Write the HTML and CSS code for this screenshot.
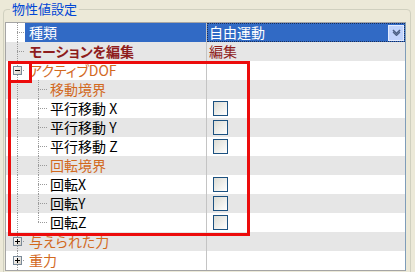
FILE: index.html
```html
<!DOCTYPE html>
<html lang="ja">
<head>
    <meta charset="UTF-8">
    <title>物性値設定</title>
    <link rel="stylesheet" href="styles.css">
</head>
<body>
    <fieldset class="props">
        <legend>物性値設定</legend>
        <div class="grid">
            <div class="row">
                <div class="name"><span class="branch top"></span><span class="label selected">種類</span></div>
                <div class="value selected">
                    <span class="text">自由運動</span>
                    <span class="drop">
                        <svg width="9" height="7" viewBox="0 0 9 7"><polyline points="1,1 4.5,4.5 8,1" fill="none" stroke="#4d6185" stroke-width="1.6"/><polyline points="1,3 4.5,6.5 8,3" fill="none" stroke="#4d6185" stroke-width="1.2"/></svg>
                    </span>
                </div>
            </div>
            <div class="row">
                <div class="name"><span class="branch top"></span><span class="label edit">モーションを編集</span></div>
                <div class="value edit-link">編集</div>
            </div>
            <div class="row">
                <div class="name"><span class="branch top"><span class="toggle minus"></span></span><span class="label cat">アクティブDOF</span></div>
                <div class="value"></div>
            </div>
            <div class="row">
                <div class="name"><span class="branch sub"></span><span class="label cat">移動境界</span></div>
                <div class="value"></div>
            </div>
            <div class="row">
                <div class="name"><span class="branch sub"></span><span class="label">平行移動 X</span></div>
                <div class="value"><span class="check"></span></div>
            </div>
            <div class="row">
                <div class="name"><span class="branch sub"></span><span class="label">平行移動 Y</span></div>
                <div class="value"><span class="check"></span></div>
            </div>
            <div class="row">
                <div class="name"><span class="branch sub"></span><span class="label">平行移動 Z</span></div>
                <div class="value"><span class="check"></span></div>
            </div>
            <div class="row">
                <div class="name"><span class="branch sub"></span><span class="label cat">回転境界</span></div>
                <div class="value"></div>
            </div>
            <div class="row">
                <div class="name"><span class="branch sub"></span><span class="label">回転X</span></div>
                <div class="value"><span class="check"></span></div>
            </div>
            <div class="row">
                <div class="name"><span class="branch sub"></span><span class="label">回転Y</span></div>
                <div class="value"><span class="check"></span></div>
            </div>
            <div class="row">
                <div class="name"><span class="branch sub last"></span><span class="label">回転Z</span></div>
                <div class="value"><span class="check"></span></div>
            </div>
            <div class="row">
                <div class="name"><span class="branch top"><span class="toggle plus"></span></span><span class="label cat">与えられた力</span></div>
                <div class="value"></div>
            </div>
            <div class="row">
                <div class="name"><span class="branch top"><span class="toggle plus"></span></span><span class="label cat">重力</span></div>
                <div class="value"></div>
            </div>
        </div>
    </fieldset>

    <!-- annotation boxes drawn over the grid -->
    <div class="mark mark-group"></div>
    <div class="mark mark-toggle"></div>
</body>
</html>
```

FILE: styles.css
```css
body {
    margin: 0;
    height: 272px;
    overflow: hidden;
    background-color: #ece9d8;
    font-family: "Noto Sans CJK JP", sans-serif;
    font-feature-settings: "palt";
    position: relative;
}

.props {
    margin: 0 4px 0 3px;
    padding: 4px 4px 0 1px;
    border: 1px solid #d0d0bf;
    border-radius: 4px;
    height: 300px;
}

.props legend {
    margin-left: 5px;
    padding: 0 2px;
    font-size: 13px;
    line-height: 18px;
    color: #0046d5;
}

.grid {
    background: #ffffff;
    border: 1px solid #a5a5a5;
    border-right-color: #7f9db9;
    font-size: 14px;
}

.row {
    display: flex;
    height: 19px;
    line-height: 19px;
}

.row:nth-child(even) {
    background-color: #e6e6e6;
}

.name {
    width: 200px;
    display: flex;
    border-right: 1px solid #c4c4c4;
    white-space: nowrap;
}

.value {
    flex: 1;
    display: flex;
    align-items: center;
    padding-left: 2px;
    white-space: nowrap;
}

/* tree connector lines */
.branch {
    flex: none;
    display: flex;
    align-items: center;
    width: 19px;
    padding-left: 7px;
    box-sizing: border-box;
    background:
        repeating-linear-gradient(to bottom, #9a9a9a 0 1px, transparent 1px 2px) 11px 0 / 1px 100% no-repeat,
        repeating-linear-gradient(to right, #9a9a9a 0 1px, transparent 1px 2px) 11px 9px / 8px 1px no-repeat;
}

.branch.sub {
    width: 42px;
    background:
        repeating-linear-gradient(to bottom, #9a9a9a 0 1px, transparent 1px 2px) 11px 0 / 1px 100% no-repeat,
        repeating-linear-gradient(to bottom, #9a9a9a 0 1px, transparent 1px 2px) 32px 0 / 1px 100% no-repeat,
        repeating-linear-gradient(to right, #9a9a9a 0 1px, transparent 1px 2px) 32px 9px / 10px 1px no-repeat;
}

.branch.sub.last {
    background:
        repeating-linear-gradient(to bottom, #9a9a9a 0 1px, transparent 1px 2px) 11px 0 / 1px 100% no-repeat,
        repeating-linear-gradient(to bottom, #9a9a9a 0 1px, transparent 1px 2px) 32px 0 / 1px 10px no-repeat,
        repeating-linear-gradient(to right, #9a9a9a 0 1px, transparent 1px 2px) 32px 9px / 10px 1px no-repeat;
}

.toggle {
    width: 9px;
    height: 9px;
    box-sizing: border-box;
    border: 1px solid #7a8a99;
    background: linear-gradient(135deg, #ffffff, #d6d0c5);
    position: relative;
}

.toggle::before {
    content: "";
    position: absolute;
    left: 1px;
    top: 3px;
    width: 5px;
    height: 1px;
    background: #000;
}

.toggle.plus::after {
    content: "";
    position: absolute;
    left: 3px;
    top: 1px;
    width: 1px;
    height: 5px;
    background: #000;
}

.label {
    flex: 1;
    padding-left: 4px;
    color: #000;
}

.branch.sub + .label {
    padding-left: 2px;
}

.label.selected {
    background: #316ac5;
    color: #ffffff;
}

.label.edit {
    color: #8e1c1c;
    font-weight: bold;
}

.label.cat {
    color: #d2691e;
}

.value.selected {
    background: #316ac5;
    color: #ffffff;
    outline: 1px dotted #1a2f5a;
    outline-offset: -1px;
}

.value .text {
    flex: 1;
}

.drop {
    width: 16px;
    height: 16px;
    margin-right: 1px;
    box-sizing: border-box;
    border: 1px solid #e4ebfd;
    background: #c1d3fb;
    display: flex;
    align-items: center;
    justify-content: center;
}

.edit-link {
    color: #8e1c1c;
}

.check {
    width: 13px;
    height: 13px;
    margin-left: 4px;
    border: 1px solid #1c5180;
    background: linear-gradient(135deg, #dcdcd4, #ffffff);
}

.mark {
    position: absolute;
    border: 3px solid #ec0c0c;
    box-sizing: border-box;
}

.mark-group {
    left: 8px;
    top: 61px;
    width: 242px;
    height: 175px;
}

.mark-toggle {
    left: 8px;
    top: 61px;
    width: 24px;
    height: 22px;
}
```
